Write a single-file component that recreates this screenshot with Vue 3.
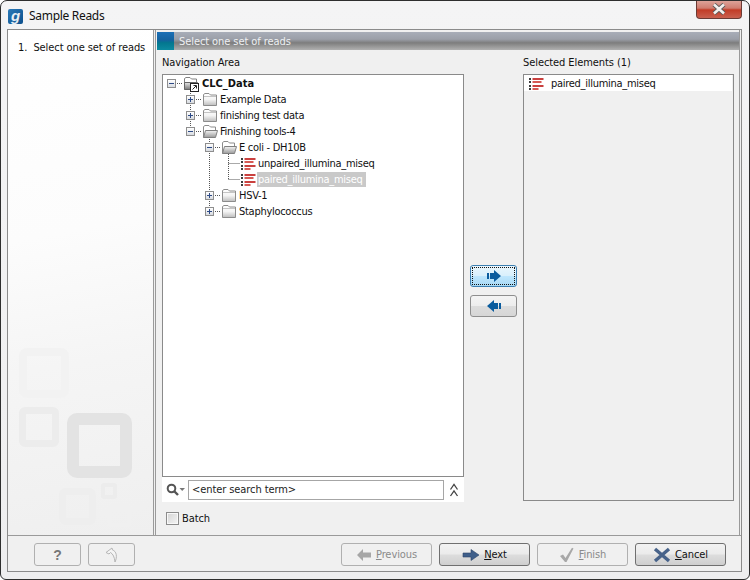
<script setup>
const rows = [
  { level: 0, label: 'CLC_Data', kind: 'root', exp: 'minus', bold: true },
  { level: 1, label: 'Example Data', kind: 'closed', exp: 'plus' },
  { level: 1, label: 'finishing test data', kind: 'closed', exp: 'plus' },
  { level: 1, label: 'Finishing tools-4', kind: 'open', exp: 'minus' },
  { level: 2, label: 'E coli - DH10B', kind: 'open', exp: 'minus' },
  { level: 3, label: 'unpaired_illumina_miseq', kind: 'reads' },
  { level: 3, label: 'paired_illumina_miseq', kind: 'reads', selected: true },
  { level: 2, label: 'HSV-1', kind: 'closed', exp: 'plus' },
  { level: 2, label: 'Staphylococcus', kind: 'closed', exp: 'plus' },
]
const marks = [
  { x: 0, y: 0, s: 50, b: 8, r: 8, c: '#f2f2f2' },
  { x: 0, y: 59, s: 40, b: 7, r: 6, c: '#ececec' },
  { x: 48, y: 65, s: 65, b: 12, r: 10, c: '#e3e3e3' },
  { x: 40, y: 140, s: 37, b: 7, r: 7, c: '#eeeeee' },
  { x: 82, y: 135, s: 16, b: 4, r: 3, c: '#ececec' },
  { x: 89, y: 156, s: 23, b: 4, r: 4, c: '#f0f0f0' },
]
const readBars = [[3, 11, '#c9403e'], [6, 9, '#d65a55'], [10, 11, '#c9403e'], [13, 6, '#d65a55']]
</script>

<template>
  <div class="win">
    <header class="title">
      <span class="logo">g</span>
      <span class="title-text">Sample Reads</span>
      <span class="close">
        <svg width="18" height="12" viewBox="0 0 18 12"><path d="M4 1.5 14 10.5M14 1.5 4 10.5" stroke="#5a5a5a" stroke-width="4.4"/><path d="M4 1.5 14 10.5M14 1.5 4 10.5" stroke="#f4f0ee" stroke-width="2.6"/></svg>
      </span>
    </header>

    <div class="frame">
      <div class="main">
        <aside class="steps">
          <div class="step">1.&nbsp; Select one set of reads</div>
          <div class="marks">
            <i v-for="(m, i) in marks" :key="i" class="mark"
               :style="{ left: m.x + 'px', top: m.y + 'px', width: m.s + 'px', height: m.s + 'px', borderWidth: m.b + 'px', borderRadius: m.r + 'px', borderColor: m.c }"></i>
          </div>
        </aside>

        <section class="panel">
          <div class="band">
            <span class="band-blue"></span>
            <span class="band-text">Select one set of reads</span>
          </div>

          <div class="columns">
            <div class="nav-col">
              <div class="col-label">Navigation Area</div>
              <div class="tree">
                <svg class="guides" width="300" height="150" viewBox="0 0 300 150">
                  <path d="M27.5 16V51M46.5 62V131M65.5 77V104M14 8.5H20M33 24.5H38M33 40.5H38M33 56.5H38M52 72.5H57M52 120.5H57M52 136.5H57M65.5 88.5H77M65.5 104.5H77" fill="none" stroke="#555" stroke-dasharray="1 1"/>
                </svg>
                <div v-for="r in rows" :key="r.label" class="row" :style="{ paddingLeft: 4 + r.level * 19 + 'px' }">
                  <span class="exp-slot">
                    <span v-if="r.exp" class="exp">
                      <i class="h"></i><i v-if="r.exp === 'plus'" class="v"></i>
                    </span>
                  </span>
                  <svg v-if="r.kind === 'closed'" class="ico" width="16" height="16" viewBox="0 0 16 16">
                    <defs><linearGradient id="fc" x1="0" y1="0" x2="0" y2="1"><stop offset="0" stop-color="#fff"/><stop offset=".5" stop-color="#f4f4f4"/><stop offset="1" stop-color="#bdbdbd"/></linearGradient></defs>
                    <path d="M1.5 14.5V3.5L3 2.5H7L8.5 4H14.5V14.5Z" fill="url(#fc)" stroke="#8c8c8c"/>
                    <path d="M2 5.5H14" stroke="#c4c4c4"/>
                  </svg>
                  <svg v-else-if="r.kind === 'open'" class="ico" width="16" height="16" viewBox="0 0 16 16">
                    <defs><linearGradient id="fo" x1="0" y1="0" x2="0" y2="1"><stop offset="0" stop-color="#f4f4f4"/><stop offset="1" stop-color="#9a9a9a"/></linearGradient></defs>
                    <path d="M1.5 14.5V3.5L3 2.5H7L8.5 4H13.5V7" fill="#fff" stroke="#8c8c8c"/>
                    <path d="M1.5 14.5 3.5 7.5H15.5L13.5 14.5Z" fill="url(#fo)" stroke="#808080"/>
                  </svg>
                  <svg v-else-if="r.kind === 'root'" class="ico" width="16" height="16" viewBox="0 0 16 16">
                    <defs><linearGradient id="fr" x1="0" y1="0" x2="0" y2="1"><stop offset="0" stop-color="#e8e8e8"/><stop offset="1" stop-color="#777"/></linearGradient></defs>
                    <path d="M1.5 14.5V3.5L3 2.5H7L8.5 4H13.5V7" fill="#fff" stroke="#808080"/>
                    <path d="M1.5 14.5V7.5H14.5V14.5Z" fill="url(#fr)" stroke="#666"/>
                  </svg>
                  <svg v-else class="ico" width="16" height="16" viewBox="0 0 16 16">
                    <g v-for="b in readBars" :key="b[0]">
                      <rect x="1" :y="b[0]" width="2" height="2" fill="#3c3c3c"/>
                      <rect x="4.5" :y="b[0]" :width="b[1]" height="2" :fill="b[2]"/>
                    </g>
                  </svg>
                  <svg v-if="r.kind === 'root'" class="shortcut" width="9" height="9" viewBox="0 0 9 9">
                    <rect x=".5" y=".5" width="8" height="8" fill="#fff" stroke="#222"/>
                    <path d="M2.5 6.5 6 3M3.5 2.5H6.5V5.5" fill="none" stroke="#222"/>
                  </svg>
                  <span class="label" :class="{ bold: r.bold, sel: r.selected, leaf: r.kind === 'reads' }">{{ r.label }}</span>
                </div>
              </div>
              <div class="search">
                <svg class="lens" width="20" height="14" viewBox="0 0 20 14">
                  <circle cx="5.5" cy="5.5" r="3.8" fill="none" stroke="#555" stroke-width="2"/>
                  <path d="M8.5 8.5 12 12" stroke="#555" stroke-width="2.4"/>
                  <path d="M13.5 5H19L16.2 8Z" fill="#777"/>
                </svg>
                <div class="input">&lt;enter search term&gt;</div>
                <svg class="collapse" width="12" height="16" viewBox="0 0 12 16">
                  <path d="M2.5 7.5 6 2.5 9.5 7.5M2.5 14 6 9 9.5 14" fill="none" stroke="#444" stroke-width="1.3"/>
                </svg>
              </div>
              <label class="batch"><span class="check"></span>Batch</label>
            </div>

            <div class="transfer">
              <button class="tbtn active">
                <span class="dots">
                  <svg width="16" height="14" viewBox="0 0 16 14"><path d="M1 4H3V10H1ZM4 4H8V1L15 7 8 13V10H4Z" fill="#0a5c9e"/></svg>
                </span>
              </button>
              <button class="tbtn">
                <svg width="16" height="14" viewBox="0 0 16 14"><path d="M15 4H13V10H15ZM12 4H8V1L1 7 8 13V10H12Z" fill="#0a5c9e"/></svg>
              </button>
            </div>

            <div class="sel-col">
              <div class="col-label">Selected Elements (1)</div>
              <div class="sel-box">
                <div class="sel-row">
                  <svg class="sel-ico" width="16" height="16" viewBox="0 0 16 16">
                    <g v-for="b in readBars" :key="b[0]">
                      <rect x="1" :y="b[0]" width="2" height="2" fill="#3c3c3c"/>
                      <rect x="4.5" :y="b[0]" :width="b[1]" height="2" :fill="b[2]"/>
                    </g>
                  </svg>
                  <span class="sel-text">paired_illumina_miseq</span>
                </div>
              </div>
            </div>
          </div>
        </section>
      </div>

      <footer class="foot">
        <div class="foot-left">
          <button class="btn small off"><b class="q">?</b></button>
          <button class="btn small off">
            <svg width="16" height="16" viewBox="0 0 16 16"><path d="M8 1 2 5.5 5 7 6.5 5.5C9 7 10.5 10 11 15 13.5 10 12.5 4 8.5 3Z" fill="#f4f4f4" stroke="#b4b4b4"/></svg>
          </button>
        </div>
        <div class="foot-right">
          <button class="btn off">
            <svg width="16" height="14" viewBox="0 0 16 14"><path d="M1 7 7 1V4.5H15V9.5H7V13Z" fill="#a6a6a6"/></svg>
            <span><u>P</u>revious</span>
          </button>
          <button class="btn on">
            <svg width="18" height="14" viewBox="0 0 18 14"><path d="M1 5H9V1.5L17 7 9 12.5V9H1Z" fill="#3f5f8a" stroke="#2b4468" stroke-width=".6"/></svg>
            <span><u>N</u>ext</span>
          </button>
          <button class="btn off">
            <svg width="16" height="16" viewBox="0 0 16 16"><path d="M1 9 4 7.5 6.5 11 13 .8 14.5 1.5 7.5 15H6Z" fill="#a8a8a8"/></svg>
            <span><u>F</u>inish</span>
          </button>
          <button class="btn on">
            <svg width="18" height="16" viewBox="0 0 18 16"><path d="M2 2 16 14M16 2 2 14" stroke="#48638a" stroke-width="3.4"/></svg>
            <span><u>C</u>ancel</span>
          </button>
        </div>
      </footer>
    </div>
  </div>
</template>

<style>
html, body { margin: 0; background: #fff; }
</style>

<style scoped>
.win {
  width: 750px; height: 580px; box-sizing: border-box;
  border: 1px solid #2e2e2e; border-radius: 7px 7px 6px 6px;
  background: linear-gradient(#f4f4f5, #eeeeef);
  padding: 0 7px 7px 6px;
  display: flex; flex-direction: column;
  font: 11px "DejaVu Sans Condensed", "DejaVu Sans", sans-serif;
  font-stretch: condensed;
  letter-spacing: -0.08px;
  color: #111;
  overflow: hidden;
}
.title { height: 28px; flex: none; display: flex; align-items: center; position: relative; }
.logo {
  width: 15px; height: 15px; margin-left: 1px; margin-top: 2px; border-radius: 2px;
  background: linear-gradient(135deg, #2a7ab8, #0c4f8c);
  color: #e8eef4; font: italic bold 15px/13px "Liberation Sans", sans-serif; text-align: center;
}
.title-text { margin-left: 6px; font: 12px "Noto Sans", sans-serif; letter-spacing: -0.3px; color: #111; }
.close {
  position: absolute; right: 0; top: -1px; width: 46px; height: 19px; box-sizing: border-box;
  border: 1px solid #6b3a34; border-top: 0; border-radius: 0 0 4px 4px;
  background: linear-gradient(#dfa79e 0%, #cf7d70 45%, #c23c27 55%, #c9604f 100%);
  display: flex; align-items: center; justify-content: center;
}
.frame {
  flex: 1; min-height: 0; display: flex; flex-direction: column;
  border: 1px solid #8b8b8b; background: #f0f0f0;
}
.main { height: 506px; box-sizing: border-box; flex: none; display: flex; border-bottom: 1px solid #9a9a9a; }
.steps {
  width: 146px; flex: none; position: relative; box-sizing: border-box;
  border-right: 1px solid #9a9a9a;
  background: linear-gradient(170deg, #fff 0%, #fcfcfc 40%, #f5f5f5 65%, #efefef 100%);
  padding: 11px 0 0 10px;
}
.step { white-space: nowrap; }
.marks { position: absolute; left: 11px; top: 318px; width: 130px; height: 186px; }
.mark { position: absolute; box-sizing: border-box; border-style: solid; }
.panel {
  flex: 1; min-width: 0; margin: 0 1px 0 1px;
  border-left: 1px solid #9a9a9a; border-right: 1px solid #9a9a9a;
  display: flex; flex-direction: column; padding: 2px 0 0 1px;
}
.band {
  height: 18px; flex: none; display: flex; align-items: center;
  background: linear-gradient(#a8adb8 0%, #9b9fa8 40%, #7d7d7d 60%, #b0b0b0 100%);
}
.band-blue { width: 17px; height: 18px; background: linear-gradient(#1b6fb6 0%, #14629f 45%, #03778f 60%, #0c8aa0 100%); }
.band-text { margin-left: 5px; color: #eef0f2; }
.columns { flex: 1; min-height: 0; display: flex; padding: 6px 5px 0 5px; }
.col-label { height: 18px; line-height: 14px; }
.nav-col { width: 302px; flex: none; }
.tree {
  height: 403px; box-sizing: border-box; position: relative;
  border: 1px solid #8a8a8a; background: #fff;
}
.guides { position: absolute; left: 0; top: 0; }
.row { height: 16px; display: flex; align-items: center; position: relative; }
.exp-slot { width: 16px; flex: none; display: flex; }
.exp {
  width: 9px; height: 9px; position: relative; box-sizing: border-box;
  border: 1px solid #8e8e8e; background: linear-gradient(#fff, #d8dbe0);
}
.exp .h { position: absolute; left: 1px; right: 1px; top: 3px; height: 1px; background: #2d4a86; }
.exp .v { position: absolute; top: 1px; bottom: 1px; left: 3px; width: 1px; background: #2d4a86; }
.ico { flex: none; }
.shortcut { position: absolute; left: 27px; top: 8px; }
.label { margin-left: 2px; line-height: 15px; white-space: nowrap; letter-spacing: -0.28px; }
.bold { margin-left: 3px; font-weight: bold; letter-spacing: 0; }
.leaf { margin-left: 2px; }
.sel { background: #c9c9c9; color: #fff; padding: 0 3px 0 1px; margin-left: 1px; }
.search { height: 25px; display: flex; align-items: center; background: #fff; }
.lens { margin-left: 4px; flex: none; }
.input {
  width: 256px; height: 20px; box-sizing: border-box; margin-left: 2px; padding-left: 3px;
  border: 1px solid #a6a6a6; line-height: 18px; color: #222; background: #fff;
}
.collapse { margin-left: 4px; }
.batch { display: flex; align-items: center; margin: 10px 0 0 4px; }
.check {
  width: 13px; height: 13px; box-sizing: border-box; margin-right: 3px;
  border: 1px solid #8c8c8c; box-shadow: inset 0 0 0 1px #f8f8f8;
  background: linear-gradient(135deg, #d4d4d4, #f4f4f4);
}
.transfer { width: 59px; flex: none; display: flex; flex-direction: column; align-items: center; gap: 8px; padding-top: 209px; }
.tbtn {
  width: 47px; height: 22px; padding: 0; box-sizing: border-box;
  border: 1px solid #8e8e8e; border-radius: 3px;
  background: linear-gradient(#f4f4f4 0%, #ededed 48%, #dcdcdc 52%, #d6d6d6 100%);
  display: flex; align-items: center; justify-content: center;
}
.tbtn.active {
  border-color: #3c7fb1;
  background: linear-gradient(#eaf6fd 0%, #d9f0fc 48%, #bee6fd 52%, #a7d9f5 100%);
}
.dots { width: 43px; height: 18px; display: flex; align-items: center; justify-content: center; border: 1px dotted #111; box-sizing: border-box; }
.sel-col { flex: 1; min-width: 0; }
.sel-box { height: 427px; box-sizing: border-box; border: 1px solid #8a8a8a; background: #f0f0f0; }
.sel-row { height: 16px; display: flex; align-items: center; background: #fff; margin-right: 1px; }
.sel-ico { margin-left: 4px; flex: none; }
.sel-text { margin-left: 7px; letter-spacing: -0.28px; }
.foot { flex: 1; display: flex; justify-content: space-between; padding: 7px 15px 0 26px; }
.foot-left, .foot-right { display: flex; gap: 7px; }
.btn {
  width: 91px; height: 23px; box-sizing: border-box; padding: 0;
  border: 1px solid #707070; border-radius: 3px;
  font: inherit; font-stretch: condensed; letter-spacing: inherit; color: #111;
  display: flex; align-items: center; justify-content: center; gap: 4px;
  background: linear-gradient(#f2f2f2 0%, #ebebeb 48%, #dddddd 52%, #cfcfcf 100%);
}
.btn.small { width: 47px; }
.btn.off { border-color: #b0b0b0; background: #f0f0f0; color: #8a8a8a; }
.q { font: bold 14px "Liberation Sans", sans-serif; color: #777; }
</style>
